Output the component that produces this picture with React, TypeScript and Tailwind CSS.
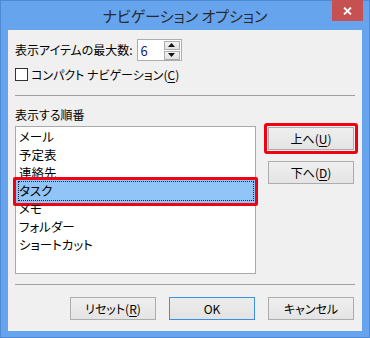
import React from "react";

const items = ["メール", "予定表", "連絡先", "タスク", "メモ", "フォルダー", "ショートカット"];
const selected = 3;

const Btn = ({ children, blue }: { children: React.ReactNode; blue?: boolean }) => (
  <button
    className={
      blue
        ? "h-[23px] w-[86px] border border-[#3c8fe6] bg-linear-to-b from-[#ececec] to-[#e3e3e3] text-[12px] leading-none text-black"
        : "h-[23px] w-[86px] border border-[#adadad] bg-linear-to-b from-[#efefef] to-[#e4e4e4] text-[12px] leading-none text-black"
    }
  >
    {children}
  </button>
);

const U = ({ c }: { c: string }) => <span className="underline underline-offset-[2px]">{c}</span>;

export default function App() {
  return (
    <div className="relative flex h-[338px] w-[370px] flex-col border border-[#4f8ad6] bg-[#66a5ee] font-['Noto_Sans_CJK_JP','Noto_Sans',sans-serif] text-black [font-feature-settings:'palt']">
      {/* title bar */}
      <div className="flex h-[29px] items-center justify-center text-[15px] leading-none text-[#2a2a2a]">
        ナビゲーション オプション
      </div>
      <div className="absolute right-[6px] top-[-1px] flex h-[21px] w-[31px] items-center justify-center bg-[#c75050]">
        <svg width="9" height="8" viewBox="0 0 9 8">
          <path d="M1 0.5 L8 7.5 M8 0.5 L1 7.5" stroke="#fff" strokeWidth="1.8" />
        </svg>
      </div>

      {/* body */}
      <div className="mx-[7px] mb-[6px] flex flex-1 flex-col bg-[#f0f0f0] px-[7px] pt-[9px] text-[12px]">
        <div className="flex h-[22px] items-center gap-[4px]">
          <span className="leading-none">表示アイテムの最大数:</span>
          <div className="flex h-[22px] w-[45px] items-center border border-[#abadb3] bg-white">
            <span className="flex-1 pl-[3px] text-[13px] leading-none text-[#1a1a6a]">6</span>
            <div className="mr-[1px] flex flex-col gap-[1px]">
              <div className="flex h-[9px] w-[16px] items-center justify-center border border-[#acacac] bg-linear-to-b from-[#f2f2f2] to-[#e2e2e2]">
                <svg width="7" height="4" viewBox="0 0 7 4"><path d="M3.5 0 L7 4 L0 4 Z" fill="#111" /></svg>
              </div>
              <div className="flex h-[9px] w-[16px] items-center justify-center border border-[#acacac] bg-linear-to-b from-[#f2f2f2] to-[#e2e2e2]">
                <svg width="7" height="4" viewBox="0 0 7 4"><path d="M0 0 L7 0 L3.5 4 Z" fill="#111" /></svg>
              </div>
            </div>
          </div>
        </div>

        <div className="mt-[7px] flex h-[13px] items-center">
          <div className="h-[13px] w-[13px] border border-[#333] bg-white" />
          <span className="ml-[3px] leading-none">
            コンパクト ナビゲーション(<U c="C" />)
          </span>
        </div>

        <div className="mt-[14px] border-t border-[#a0a0a0]" />

        <div className="mt-[11px] h-[16px] leading-[16px]">表示する順番</div>

        <div className="mt-[3px] flex gap-[12px]">
          <div className="h-[148px] w-[241px] border border-[#a9a9a9] bg-white pt-[1px]">
            {items.map((it, i) => (
              <div key={it} className="relative flex h-[18px] items-center pl-[3px] text-[12.5px]">
                {i === selected && (
                  <>
                    <div className="absolute bottom-[-6px] left-[-3px] right-[-3px] top-[-5px] rounded-[2px] border-[3px] border-[#f00010] bg-[#91c5f8]" />
                    <div className="absolute bottom-[-1px] left-[2px] right-[1px] top-[-1px] border border-dotted border-[#222]" />
                  </>
                )}
                <span className="relative leading-none">{it}</span>
              </div>
            ))}
          </div>
          <div className="flex flex-col pt-[1px]">
            <div className="relative">
              <div className="absolute -inset-[4px] rounded-[3px] border-[3px] border-[#f00010]" />
              <Btn>
                上へ(<U c="U" />)
              </Btn>
            </div>
            <div className="mt-[11px]">
              <Btn>
                下へ(<U c="D" />)
              </Btn>
            </div>
          </div>
        </div>

        <div className="mt-[10px] border-t border-[#a0a0a0]" />

        <div className="mt-[12px] flex justify-end gap-[13px] pr-[1px]">
          <Btn>
            リセット(<U c="R" />)
          </Btn>
          <Btn blue>OK</Btn>
          <Btn>キャンセル</Btn>
        </div>
      </div>
    </div>
  );
}
